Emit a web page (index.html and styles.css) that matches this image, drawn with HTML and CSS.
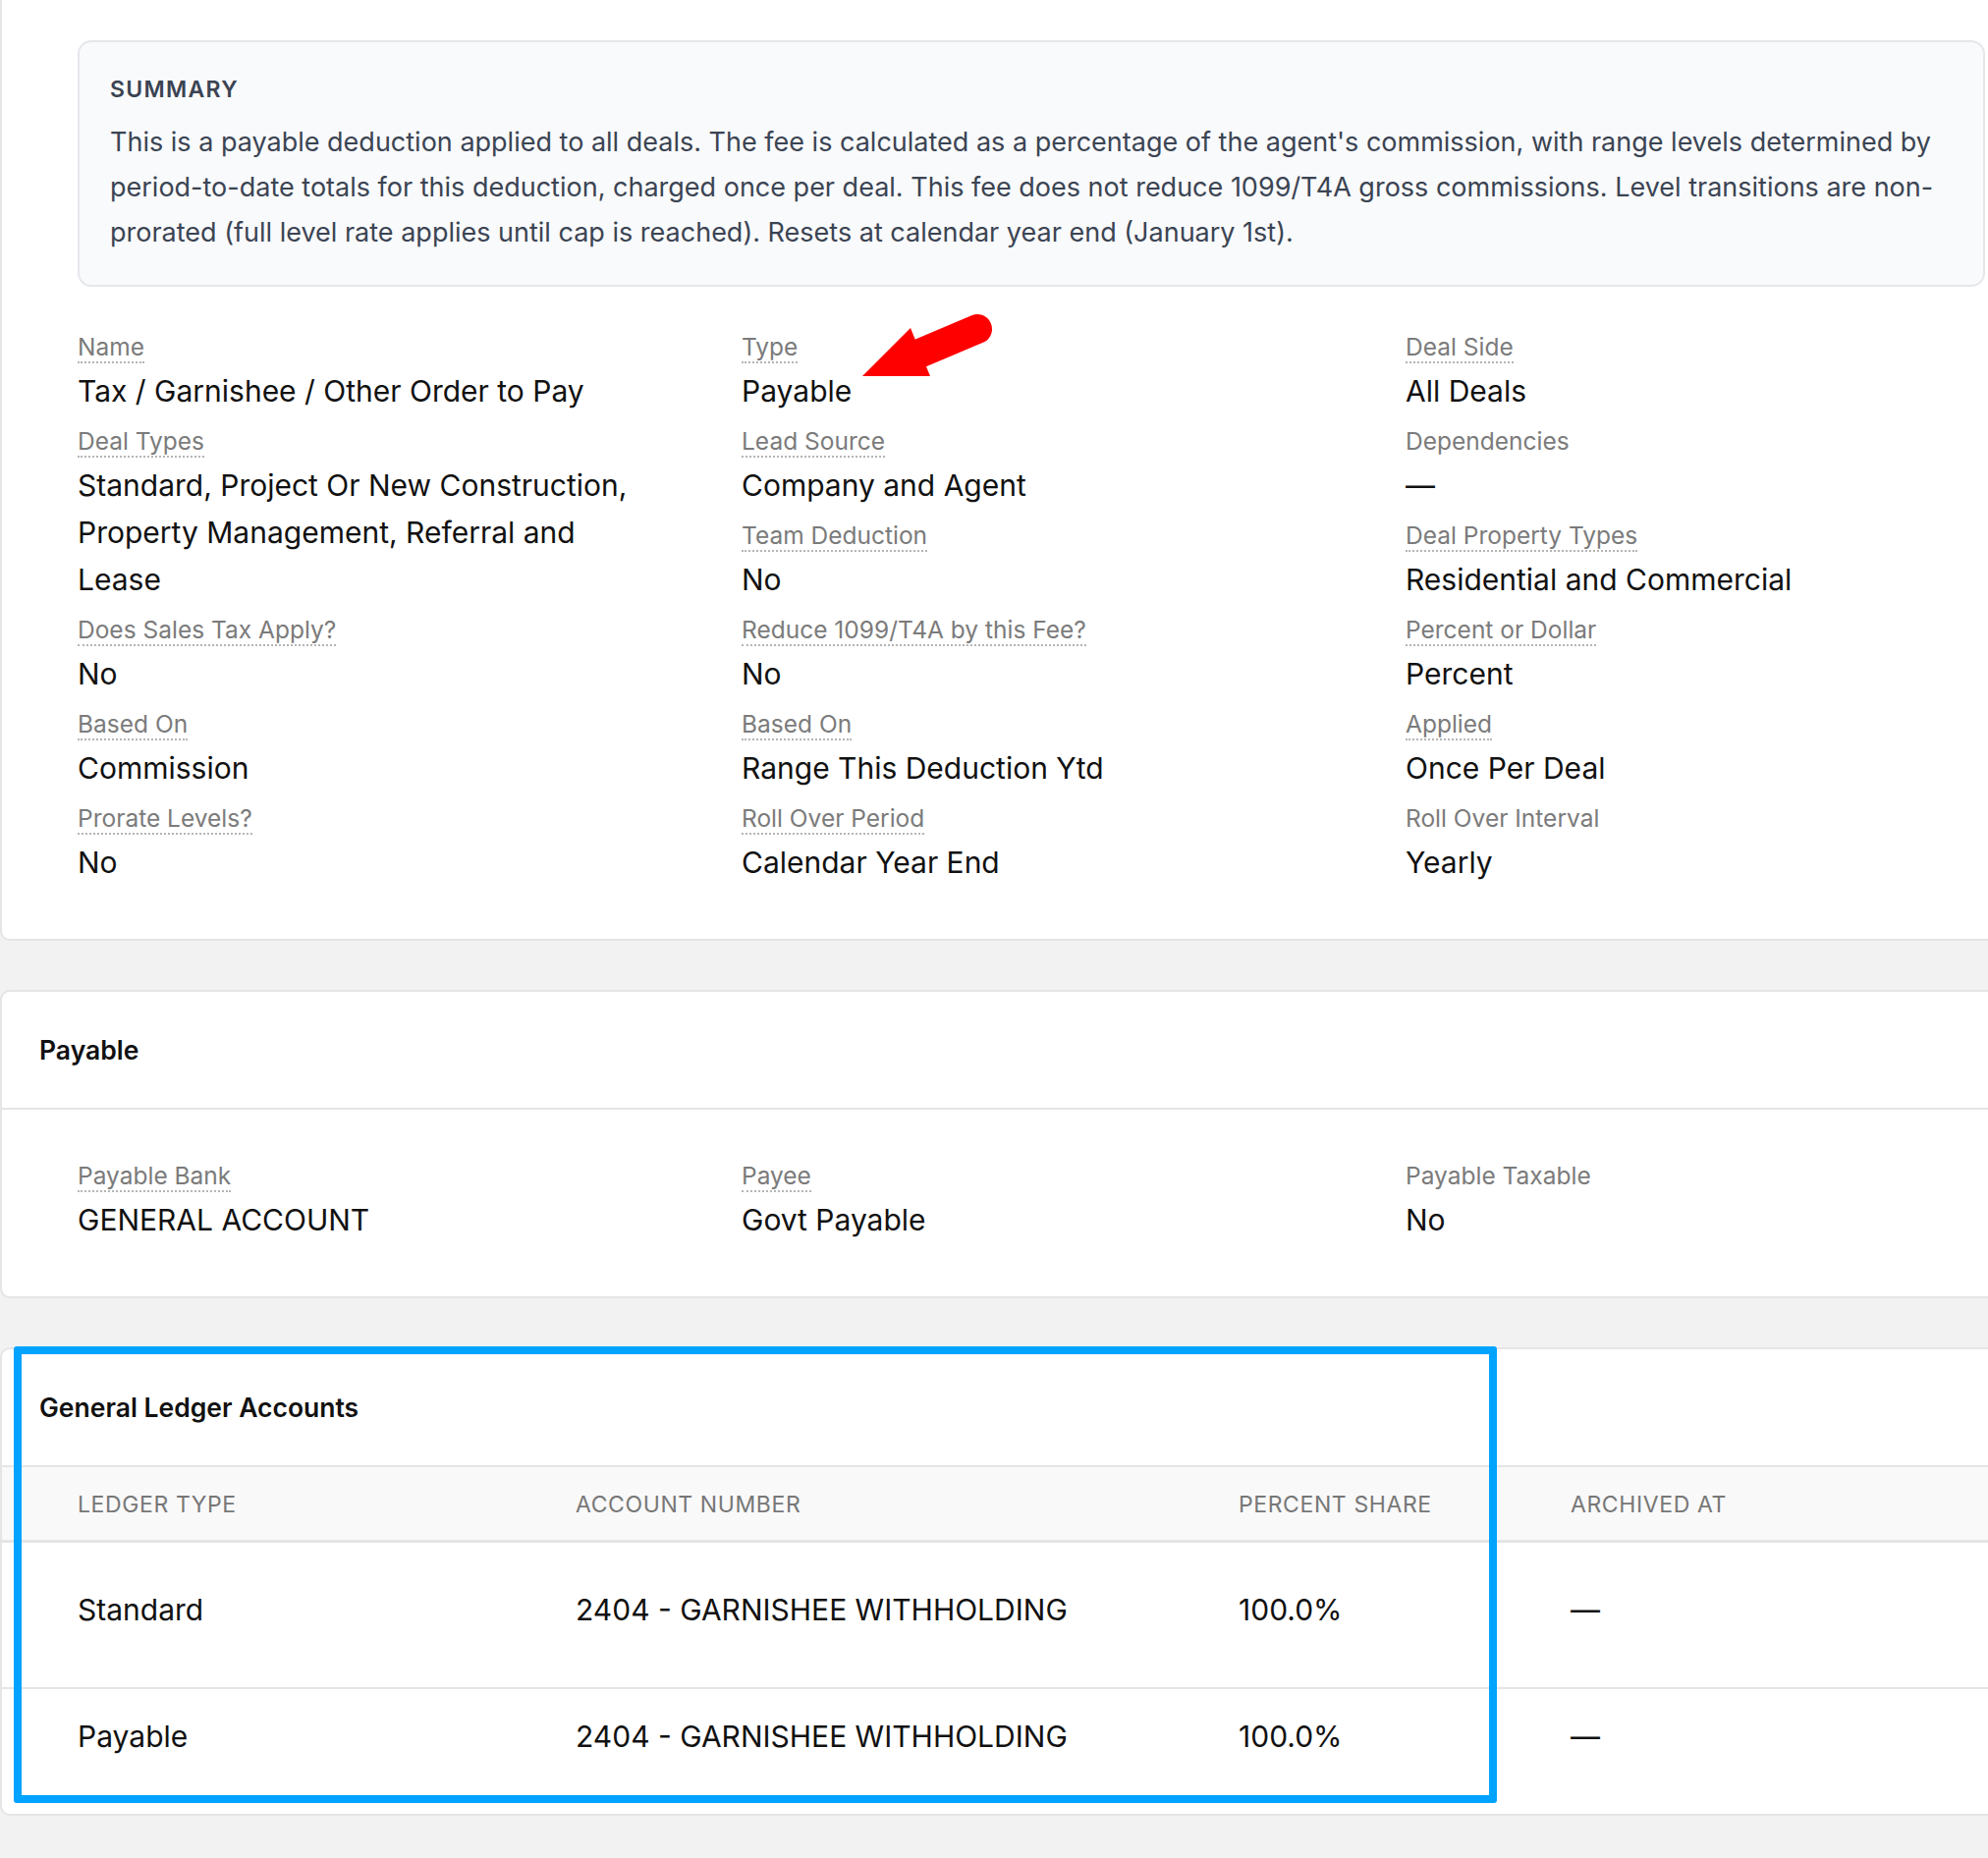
FILE: index.html
```html
<!DOCTYPE html>
<html>
<head>
    <title>Deduction Details</title>
    <link rel="stylesheet" href="styles.css">
</head>
<body>
<div class="page">

    <div class="card card-top">
        <div class="summary">
            <h3>Summary</h3>
            <p>This is a payable deduction applied to all deals. The fee is calculated as a percentage of the agent's commission, with range levels determined by period-to-date totals for this deduction, charged once per deal. This fee does not reduce 1099/T4A gross commissions. Level transitions are non-prorated (full level rate applies until cap is reached). Resets at calendar year end (January 1st).</p>
        </div>

        <div class="fields">
            <div class="col">
                <div class="field"><div class="label"><span class="tip">Name</span></div><div class="value">Tax / Garnishee / Other Order to Pay</div></div>
                <div class="field"><div class="label"><span class="tip">Deal Types</span></div><div class="value">Standard, Project Or New Construction, Property Management, Referral and Lease</div></div>
                <div class="field"><div class="label"><span class="tip">Does Sales Tax Apply?</span></div><div class="value">No</div></div>
                <div class="field"><div class="label"><span class="tip">Based On</span></div><div class="value">Commission</div></div>
                <div class="field"><div class="label"><span class="tip">Prorate Levels?</span></div><div class="value">No</div></div>
            </div>
            <div class="col">
                <div class="field"><div class="label"><span class="tip">Type</span></div><div class="value">Payable</div></div>
                <div class="field"><div class="label"><span class="tip">Lead Source</span></div><div class="value">Company and Agent</div></div>
                <div class="field"><div class="label"><span class="tip">Team Deduction</span></div><div class="value">No</div></div>
                <div class="field"><div class="label"><span class="tip">Reduce 1099/T4A by this Fee?</span></div><div class="value">No</div></div>
                <div class="field"><div class="label"><span class="tip">Based On</span></div><div class="value">Range This Deduction Ytd</div></div>
                <div class="field"><div class="label"><span class="tip">Roll Over Period</span></div><div class="value">Calendar Year End</div></div>
            </div>
            <div class="col">
                <div class="field"><div class="label"><span class="tip">Deal Side</span></div><div class="value">All Deals</div></div>
                <div class="field"><div class="label">Dependencies</div><div class="value">&mdash;</div></div>
                <div class="field"><div class="label"><span class="tip">Deal Property Types</span></div><div class="value">Residential and Commercial</div></div>
                <div class="field"><div class="label"><span class="tip">Percent or Dollar</span></div><div class="value">Percent</div></div>
                <div class="field"><div class="label"><span class="tip">Applied</span></div><div class="value">Once Per Deal</div></div>
                <div class="field"><div class="label">Roll Over Interval</div><div class="value">Yearly</div></div>
            </div>
        </div>
    </div>

    <div class="card">
        <div class="card-header">Payable</div>
        <div class="card-body">
            <div class="fields">
                <div class="col">
                    <div class="field"><div class="label"><span class="tip">Payable Bank</span></div><div class="value">GENERAL ACCOUNT</div></div>
                </div>
                <div class="col">
                    <div class="field"><div class="label"><span class="tip">Payee</span></div><div class="value">Govt Payable</div></div>
                </div>
                <div class="col">
                    <div class="field"><div class="label">Payable Taxable</div><div class="value">No</div></div>
                </div>
            </div>
        </div>
    </div>

    <div class="card">
        <div class="card-header">General Ledger Accounts</div>
        <table class="ledger">
            <colgroup>
                <col class="c-type">
                <col class="c-account">
                <col class="c-share">
                <col>
            </colgroup>
            <thead>
                <tr><th>Ledger Type</th><th>Account Number</th><th>Percent Share</th><th>Archived At</th></tr>
            </thead>
            <tbody>
                <tr><td>Standard</td><td>2404 - GARNISHEE WITHHOLDING</td><td>100.0%</td><td>&mdash;</td></tr>
                <tr><td>Payable</td><td>2404 - GARNISHEE WITHHOLDING</td><td>100.0%</td><td>&mdash;</td></tr>
            </tbody>
        </table>
    </div>

    <!-- annotations drawn over the screenshot -->
    <svg class="arrow" width="180" height="110" viewBox="0 0 180 110">
        <polygon points="18,83 67,34 87,83" fill="#ff0000"/>
        <line x1="76" y1="60" x2="135" y2="35" stroke="#ff0000" stroke-width="30" stroke-linecap="round"/>
    </svg>
    <div class="highlight-box"></div>
</div>
</body>
</html>
```

FILE: styles.css
```css
html, body {
    margin: 0;
    padding: 0;
    overflow: hidden;
}
body {
    background: #f2f2f2;
    font-family: Inter, "Noto Sans", sans-serif;
    color: #111;
}
.page {
    position: relative;
    width: 2100px;
}
.card {
    background: #fff;
    border: 2px solid #e5e5e5;
    border-radius: 10px;
    margin-top: 50px;
}
.card-top {
    margin-top: 0;
    border-top: none;
    border-radius: 0 0 10px 10px;
    padding: 41px 77px 48px;
}
.summary {
    background: #f9fafb;
    border: 2px solid #e5e7eb;
    border-radius: 14px;
    padding: 32px 31px 30px;
    color: #3b4453;
}
.summary h3 {
    margin: 0;
    font-size: 23px;
    line-height: 32px;
    font-weight: 600;
    letter-spacing: 1.3px;
    text-transform: uppercase;
}
.summary p {
    margin: 15px 0 0;
    font-size: 27px;
    line-height: 46px;
}
.fields {
    display: grid;
    grid-template-columns: repeat(3, 589px);
    column-gap: 87px;
    margin-top: 40px;
}
.card-body .fields {
    margin-top: 0;
}
.field {
    margin-bottom: 6px;
}
.label {
    font-size: 24.5px;
    line-height: 42px;
    color: #7b7b7b;
}
.tip {
    border-bottom: 2px dotted #b5b5b5;
}
.value {
    font-size: 30px;
    line-height: 48px;
    color: #111;
}
.card-header {
    padding: 43px 38px;
    font-size: 26.5px;
    line-height: 32px;
    font-weight: 600;
    border-bottom: 2px solid #e5e5e5;
}
.card-body {
    padding: 46px 77px 48px;
}
.ledger {
    width: 100%;
    border-collapse: collapse;
    table-layout: fixed;
}
.c-type { width: 584px; }
.c-account { width: 675px; }
.c-share { width: 338px; }
.ledger th {
    text-align: left;
    font-weight: 400;
    font-size: 23px;
    line-height: 30px;
    letter-spacing: 0.6px;
    text-transform: uppercase;
    color: #777;
    background: #f9f9f9;
    padding: 23px 0 21px;
    border-bottom: 3px solid #e5e5e5;
}
.ledger td {
    font-size: 30px;
    line-height: 48px;
    padding: 24px 0 55px;
    border-bottom: 2px solid #e5e5e5;
}
.ledger tbody tr:first-child td {
    padding-top: 44px;
}
.ledger tbody tr:last-child td {
    border-bottom: none;
}
.ledger th:first-child,
.ledger td:first-child {
    padding-left: 77px;
}
.arrow {
    position: absolute;
    left: 860px;
    top: 300px;
}
.highlight-box {
    position: absolute;
    left: 14px;
    top: 1371px;
    width: 1510px;
    height: 465px;
    box-sizing: border-box;
    border: 8px solid #00a3ff;
    border-radius: 3px;
}
```
